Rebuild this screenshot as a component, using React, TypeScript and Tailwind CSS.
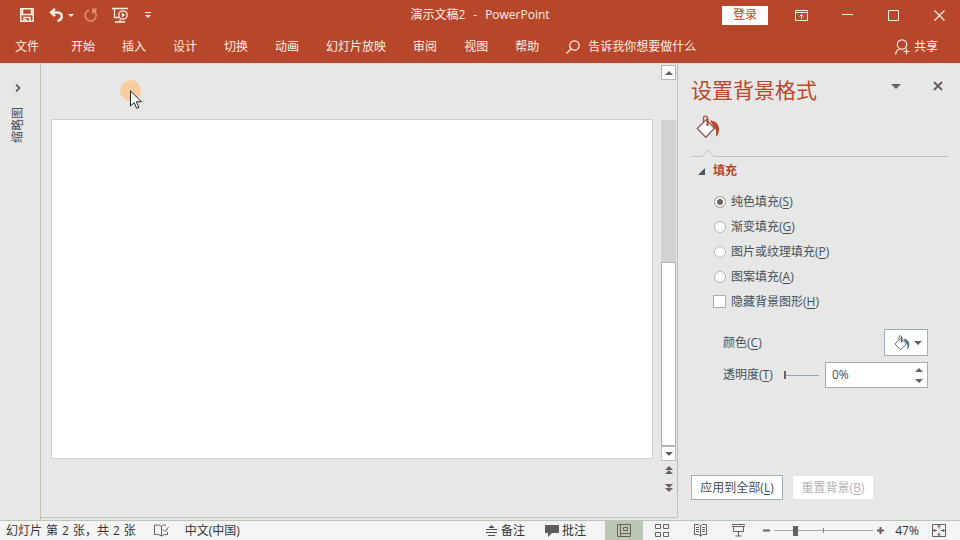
import React from 'react';

const ribbonTabs = ['开始', '插入', '设计', '切换', '动画', '幻灯片放映', '审阅', '视图', '帮助'];

const fillOptions = [
    { id: 'solid', label: '纯色填充', hotkey: 'S' },
    { id: 'gradient', label: '渐变填充', hotkey: 'G' },
    { id: 'picture', label: '图片或纹理填充', hotkey: 'P' },
    { id: 'pattern', label: '图案填充', hotkey: 'A' },
];

const slideStatus = ['幻灯片', '第', '2', '张，共', '2', '张'];

const Hotkey: React.FC<{ letter: string }> = ({ letter }) => (
    <>(<span className="underline underline-offset-2">{letter}</span>)</>
);

const Caret: React.FC<{ className?: string; up?: boolean }> = ({ className = '', up }) => (
    <svg viewBox="0 0 8 4" className={`h-1 w-2 ${className}`} fill="currentColor">
        <path d={up ? 'M0 4 4 0l4 4z' : 'M0 0h8L4 4z'} />
    </svg>
);

const PaintBucket: React.FC<{ className: string; drop: string; spout: string; outline: string }> = ({ className, drop, spout, outline }) => (
    <svg viewBox="0 0 24 24" className={className} fill="none">
        <path d="M14 5.500c5.500 0 9 4 9 8.500 0 3-.8 5.500-3 8V15l-4-6z" fill={drop} />
        <path d="M10 4.800 18.500 13.300l-8.700 9L1.300 13.500z" fill="#fff" stroke={outline} strokeWidth="1.300" />
        <path d="M7.500 8V3c0-2.500 4-2.500 4 0v3" stroke={outline} strokeWidth="1.300" />
        <path d="M11.500 3.500V11" stroke={spout} strokeWidth="2" />
    </svg>
);

const TitleBar: React.FC = () => (
    <div className="grid h-[30px] grid-cols-[1fr_auto_1fr] items-center">
        <div className="flex items-center pl-5">
            <button aria-label="保存">
                <svg viewBox="0 0 14 14" className="size-3.5" fill="none" stroke="currentColor" strokeWidth="1.500">
                    <path d="M.8.8h12.400v12.400H.8zM2.500 1v5.500h9V1M1 6.500h12M4 13V9.500h6V13M5.800 13v-2" />
                </svg>
            </button>
            <button aria-label="撤消" className="ml-[15px]">
                <svg viewBox="0 0 14 14" className="size-3.5" fill="none" stroke="currentColor" strokeWidth="2.400">
                    <path d="M2 4.500h6c6 0 6.500 6.500.5 8.500" />
                    <path d="M6 .8 2 4.500l4 3.700" />
                </svg>
            </button>
            <button aria-label="撤消选项" className="ml-[5px]">
                <svg viewBox="0 0 6 3" className="h-[3px] w-1.5" fill="currentColor"><path d="M0 0h6L3 3z" /></svg>
            </button>
            <button aria-label="恢复" disabled className="ml-2.5 text-[#dc8f75]">
                <svg viewBox="0 0 14 14" className="size-3.5" fill="none" stroke="currentColor" strokeWidth="1.600">
                    <path d="M5 2.200A5.500 5.500 0 1 0 10.500 3.500" />
                    <path d="M8 .5h5.500L12 2l.5 4L10.500 4.500 8 6z" fill="currentColor" stroke="none" />
                </svg>
            </button>
            <button aria-label="从头开始放映" className="ml-3.5">
                <svg viewBox="0 0 16 16" className="size-4" fill="none" stroke="currentColor" strokeWidth="1.300">
                    <path d="M0 1.500h16M2.500 2v8.500H7M3 15h10M8 12.500V15" />
                    <circle cx="11" cy="8" r="4.200" />
                    <path d="M9.800 5.500v5l3.500-2.500z" fill="currentColor" stroke="none" />
                </svg>
            </button>
            <button aria-label="自定义快速访问工具栏" className="ml-[17px]">
                <svg viewBox="0 0 6 6" className="size-1.5" fill="currentColor"><path d="M0 0h6v1H0zM0 3h6L3 6z" /></svg>
            </button>
        </div>
        <h1 className="flex gap-2">
            <span>演示文稿2</span>
            <span>-</span>
            <span>PowerPoint</span>
        </h1>
        <div className="flex items-center justify-end gap-1">
            <button className="mr-2 h-[19px] w-[46px] bg-white text-[#b7472a]">登录</button>
            <button aria-label="功能区显示选项" className="flex w-[42px] justify-center">
                <svg viewBox="0 0 13 11" className="h-[11px] w-[13px]" fill="none" stroke="currentColor">
                    <path d="M.5.500h12v10H.5zM.5 2.500h12M6.500 9V4.500M4.500 6.500l2-2 2 2" />
                </svg>
            </button>
            <button aria-label="最小化" className="flex w-[42px] justify-center">
                <svg viewBox="0 0 11 11" className="size-[11px]" stroke="currentColor"><path d="M0 4.500h11" /></svg>
            </button>
            <button aria-label="最大化" className="flex w-[42px] justify-center">
                <svg viewBox="0 0 11 11" className="size-[11px]" fill="none" stroke="currentColor"><path d="M.5.500h10v10H.5z" /></svg>
            </button>
            <button aria-label="关闭" className="flex w-[42px] justify-center">
                <svg viewBox="0 0 11 11" className="size-[11px]" stroke="currentColor" strokeWidth="1.200"><path d="m.5.500 10 10M10.500.500l-10 10" /></svg>
            </button>
        </div>
    </div>
);

const RibbonTabs: React.FC = () => (
    <nav className="flex h-[33px] items-center pr-[22px] pl-[15px]">
        <button className="mr-8">文件</button>
        <div className="flex gap-[27px]">
            {ribbonTabs.map((tab) => (
                <button key={tab}>{tab}</button>
            ))}
        </div>
        <button className="ml-[27px] flex items-center gap-2">
            <svg viewBox="0 0 14 14" className="size-3.5" fill="none" stroke="currentColor" strokeWidth="1.200">
                <circle cx="8.500" cy="5.500" r="4.700" />
                <path d="M5 9 .5 13.500" />
            </svg>
            告诉我你想要做什么
        </button>
        <button className="ml-auto flex items-center gap-1">
            <svg viewBox="0 0 15 16" className="h-4 w-[15px]" fill="none" stroke="currentColor" strokeWidth="1.200">
                <circle cx="7" cy="5.500" r="4.700" />
                <path d="M.6 15.500c.3-3 1.900-5 4.400-5.800M11.500 9.500v6M8.500 12.500h6" />
            </svg>
            共享
        </button>
    </nav>
);

const ScrollBar: React.FC = () => (
    <div className="mr-px flex w-[15px] flex-col items-center text-[#6b5f5c]">
        <button aria-label="向上滚动" className="mb-10 flex h-[15px] w-full items-center justify-center border border-[#a9b8c4] bg-white">
            <Caret up />
        </button>
        <div className="flex w-full flex-1 flex-col bg-[#d2d2d2]">
            <div className="flex-[143]" />
            <div className="flex-[183] border border-[#a9b0b8] bg-white" />
        </div>
        <button aria-label="向下滚动" className="flex h-[15px] w-full items-center justify-center border border-[#b9c4b5] bg-white">
            <Caret />
        </button>
        <button aria-label="上一张幻灯片" className="mt-[5px]">
            <svg viewBox="0 0 8 9" className="h-[9px] w-2" fill="currentColor"><path d="M4 0 8 4H0zM4 4l4 4H0z" /></svg>
        </button>
        <button aria-label="下一张幻灯片" className="mt-2 mb-[25px]">
            <svg viewBox="0 0 8 9" className="h-[9px] w-2" fill="currentColor"><path d="M0 1h8L4 5zM0 5h8L4 9z" /></svg>
        </button>
    </div>
);

const Editor: React.FC = () => (
    <main className="relative mb-0.5 flex flex-1 border-r border-b border-[#bcc2b9] pt-px">
        <div className="flex-1 px-2 pt-[54px] pl-2.5">
            <div className="aspect-[602/340] w-full border border-[#cfcfcf] bg-white" />
        </div>
        <ScrollBar />
        {/* mouse pointer with its highlight */}
        <div className="absolute top-4 left-[79px]">
            <div className="size-[21px] rounded-full bg-[#f8cd9f]" />
            <svg viewBox="0 0 12 19" className="absolute top-2.5 left-2.5 h-[19px] w-3" fill="#fff" stroke="#222">
                <path d="M.5.800v15.200l3.600-3.400 2.500 5.700 2.300-1-2.500-5.500h5z" />
            </svg>
        </div>
    </main>
);

const FormatPanel: React.FC = () => (
    <aside className="flex w-[282px] flex-col pr-3 pl-[13px] text-[#44505a]">
        <div className="flex h-[51px] items-center text-[#6b5f5c]">
            <h2 className="text-[21px] text-[#b7472a]">设置背景格式</h2>
            <button aria-label="任务窗格选项" className="mr-8 mb-1.5 ml-auto">
                <svg viewBox="0 0 10 5" className="h-[5px] w-2.5" fill="currentColor"><path d="M0 0h10L5 5z" /></svg>
            </button>
            <button aria-label="关闭窗格" className="mr-[5px] mb-2">
                <svg viewBox="0 0 10 10" className="size-2.5" stroke="currentColor" strokeWidth="2"><path d="m1 1 8 8M9 1 1 9" /></svg>
            </button>
        </div>
        <button aria-label="填充" className="ml-[5px] self-start">
            <PaintBucket className="size-6" drop="#b7472a" spout="#b7472a" outline="#8a5a4c" />
        </button>
        <div className="mt-2.5 flex items-end">
            <div className="w-[11px] border-b border-[#b9c4b5]" />
            <svg viewBox="0 0 12 8" className="h-2 w-3" fill="none" stroke="#b9c4b5"><path d="m0 7.500 6-6.500 6 6.500" /></svg>
            <div className="flex-1 border-b border-[#b9c4b5]" />
        </div>
        <button className="mt-1 ml-[7px] flex h-5 items-center gap-2 self-start font-bold text-[#b7472a]">
            <svg viewBox="0 0 7 7" className="size-[7px]" fill="#44546a"><path d="M7 0v7H0z" /></svg>
            填充
        </button>
        <fieldset className="mt-2 ml-[23px]">
            {fillOptions.map((option, index) => (
                <label key={option.id} className="flex h-[25px] items-center gap-[5px]">
                    <input
                        type="radio"
                        name="fill"
                        defaultChecked={index === 0}
                        className="size-3 appearance-none rounded-full border border-[#b4b4b4] bg-white checked:bg-[#6b5f5c] checked:shadow-[inset_0_0_0_2px_#fff]"
                    />
                    <span>{option.label}<Hotkey letter={option.hotkey} /></span>
                </label>
            ))}
            <label className="-ml-px flex h-[25px] items-center gap-[5px]">
                <input type="checkbox" className="size-[13px] appearance-none border border-[#9db0c0] bg-white" />
                <span>隐藏背景图形<Hotkey letter="H" /></span>
            </label>
        </fieldset>
        <div className="mt-[15px] mr-5 ml-8 flex items-center justify-between">
            <span id="color-label">颜色<Hotkey letter="C" /></span>
            <button aria-labelledby="color-label" className="flex h-[27px] w-11 items-center justify-center gap-1 border border-[#9db0c0] bg-white pl-1 text-[#6b5f5c]">
                <PaintBucket className="size-4" drop="#4f74a3" spout="#555555" outline="#555555" />
                <Caret />
            </button>
        </div>
        <div className="mt-1.5 mr-5 ml-8 flex items-center">
            <label htmlFor="transparency">透明度<Hotkey letter="T" /></label>
            <input
                type="range"
                aria-label="透明度"
                defaultValue={0}
                className="mr-1.5 ml-auto h-2 w-[35px] appearance-none bg-[linear-gradient(#8fa5b8,#8fa5b8)] bg-[length:100%_1px] bg-center bg-no-repeat [&::-webkit-slider-thumb]:h-2 [&::-webkit-slider-thumb]:w-0.5 [&::-webkit-slider-thumb]:appearance-none [&::-webkit-slider-thumb]:bg-[#6b5f5c]"
            />
            <div className="flex h-[26px] w-[103px] items-center border border-[#9db0c0] bg-white pr-1 pl-1.5">
                <input id="transparency" defaultValue="0%" className="w-full min-w-0 bg-transparent outline-none" />
                <div className="flex flex-col gap-[7px] text-[#6b5f5c]">
                    <button aria-label="增加"><Caret up className="block" /></button>
                    <button aria-label="减少"><Caret className="block" /></button>
                </div>
            </div>
        </div>
        <div className="mt-auto mb-5 flex items-center gap-2.5">
            <button className="h-[25px] w-[92px] border border-[#9db0c0] bg-white">应用到全部<Hotkey letter="L" /></button>
            <button disabled className="h-[23px] w-20 bg-white text-[#b3b3b3]">重置背景<Hotkey letter="B" /></button>
        </div>
    </aside>
);

const StatusBar: React.FC = () => (
    <footer className="flex h-5 items-center border-t border-[#b9c8b4] bg-[#f4f4f4] pl-1.5 text-[#333]">
        <p className="flex gap-1">
            {slideStatus.map((part, index) => (
                <span key={index}>{part}</span>
            ))}
        </p>
        <button aria-label="拼写检查" className="ml-[18px] text-[#6b5f5c]">
            <svg viewBox="0 0 15 13" className="h-[13px] w-[15px]" fill="none" stroke="currentColor">
                <path d="M7.500 2.500C6 1 3 .8.500 1v9.500c2.500-.2 5 0 7 1.500V2.500C8.500 1.300 10 1 12 1M7.500 12c1.500-1.200 3.500-1.500 6-1.500V8M9 5.500l2 2L14.500 3" />
            </svg>
        </button>
        <button className="ml-4">中文(中国)</button>
        <button className="ml-auto flex items-center gap-1">
            <svg viewBox="0 0 11 11" className="h-[11px] w-[11px] text-[#44505a]" fill="none" stroke="currentColor">
                <path d="M0 4.500h11M0 7.500h11M2 10.500h7" />
                <path d="M5.500 0 8.500 3h-6z" fill="currentColor" stroke="none" />
            </svg>
            备注
        </button>
        <button className="ml-5 flex items-center gap-[3px]">
            <svg viewBox="0 0 14 13" className="h-[13px] w-3.5" fill="#5f5c5c"><path d="M1 1h12q1 0 1 1v6q0 1-1 1H7l-4 4V9H1Q0 9 0 8V2q0-1 1-1z" /></svg>
            批注
        </button>
        <div className="ml-[19px] flex self-stretch text-[#6b5f5c]">
            <button aria-label="普通视图" className="flex w-[38px] items-center justify-center bg-[#bcc7b8]">
                <svg viewBox="0 0 14 13" className="h-[13px] w-3.5" fill="none" stroke="currentColor">
                    <path d="M.5.500h13v12H.5zM3.500.500v12M3.500 9.500h10M6.500 3.500h4v3h-4z" />
                </svg>
            </button>
            <button aria-label="幻灯片浏览" className="flex w-[38px] items-center justify-center">
                <svg viewBox="0 0 14 13" className="h-[13px] w-3.5" fill="none" stroke="currentColor">
                    <path d="M.5.500h5v4h-5zM8.500.500h5v4h-5zM.5 8.500h5v4h-5zM8.500 8.500h5v4h-5z" />
                </svg>
            </button>
            <button aria-label="阅读视图" className="flex w-[38px] items-center justify-center">
                <svg viewBox="0 0 13 13" className="size-[13px]" fill="none" stroke="currentColor">
                    <path d="M6.500 2 4.500.500h-4v10h4l2 1.500 2-1.500h4V.5h-4zV12M2 3.500h3M2 5.500h3M2 7.500h3M8 3.500h3M8 5.500h3M8 7.500h3" />
                </svg>
            </button>
            <button aria-label="幻灯片放映" className="flex w-[38px] items-center justify-center">
                <svg viewBox="0 0 13 13" className="size-[13px]" fill="none" stroke="currentColor">
                    <path d="M0 .5h13M0 2.500h13M1.500 3v4.500h10V3M6.500 8v4M3.500 12h6" />
                </svg>
            </button>
        </div>
        <div className="ml-1.5 flex items-center gap-1 text-[#6b5f5c]">
            <button aria-label="缩小">
                <svg viewBox="0 0 7 7" className="size-[7px]" stroke="currentColor" strokeWidth="2"><path d="M0 3.500h7" /></svg>
            </button>
            <input
                type="range"
                aria-label="缩放"
                defaultValue={20}
                className="h-2.5 w-[99px] appearance-none bg-[linear-gradient(#8a8a8a,#8a8a8a),linear-gradient(#aaaaaa,#aaaaaa)] bg-[length:1px_5px,100%_1px] bg-center bg-no-repeat [&::-webkit-slider-thumb]:h-2.5 [&::-webkit-slider-thumb]:w-[5px] [&::-webkit-slider-thumb]:appearance-none [&::-webkit-slider-thumb]:bg-[#6b5f5c]"
            />
            <button aria-label="放大">
                <svg viewBox="0 0 7 7" className="size-[7px]" stroke="currentColor" strokeWidth="2"><path d="M0 3.500h7M3.500 0v7" /></svg>
            </button>
        </div>
        <button className="ml-2.5 w-[26px]">47%</button>
        <button aria-label="使幻灯片适应当前窗口" className="mr-3.5 ml-3 text-[#6b5f5c]">
            <svg viewBox="0 0 14 13" className="h-[13px] w-3.5" fill="none" stroke="currentColor">
                <path d="M.5.500h13v12H.5zM7 1v3.500M5.500 3 7 1.500 8.500 3M7 12V8.500M5.500 10 7 11.500 8.500 10M1 6.500h4M3 5 1.500 6.500 3 8M13 6.500H9M11 5l1.500 1.500L11 8" />
            </svg>
        </button>
    </footer>
);

const App: React.FC = () => (
    <div className="flex min-h-screen flex-col bg-[#e7e7e7] font-['Open_Sans','Noto_Sans_CJK_SC',sans-serif] text-xs whitespace-nowrap">
        <header className="border-b border-[#f0dcd6] bg-[#b7472a] text-[#fdeee4]">
            <TitleBar />
            <RibbonTabs />
        </header>
        <div className="flex flex-1">
            <div className="flex w-[41px] flex-col items-center gap-[15px] border-r border-[#b9c4b5] pt-5 pr-1 text-[#44505a]">
                <button aria-label="展开缩略图">
                    <svg viewBox="0 0 6 8" className="h-2 w-1.5" fill="none" stroke="#6b5f5c" strokeWidth="1.800"><path d="m1 .500 3.500 3.500L1 7.500" /></svg>
                </button>
                <span className="rotate-180 [text-orientation:sideways] [writing-mode:vertical-rl]">缩略图</span>
            </div>
            <Editor />
            <FormatPanel />
        </div>
        <StatusBar />
    </div>
);

export default App;
